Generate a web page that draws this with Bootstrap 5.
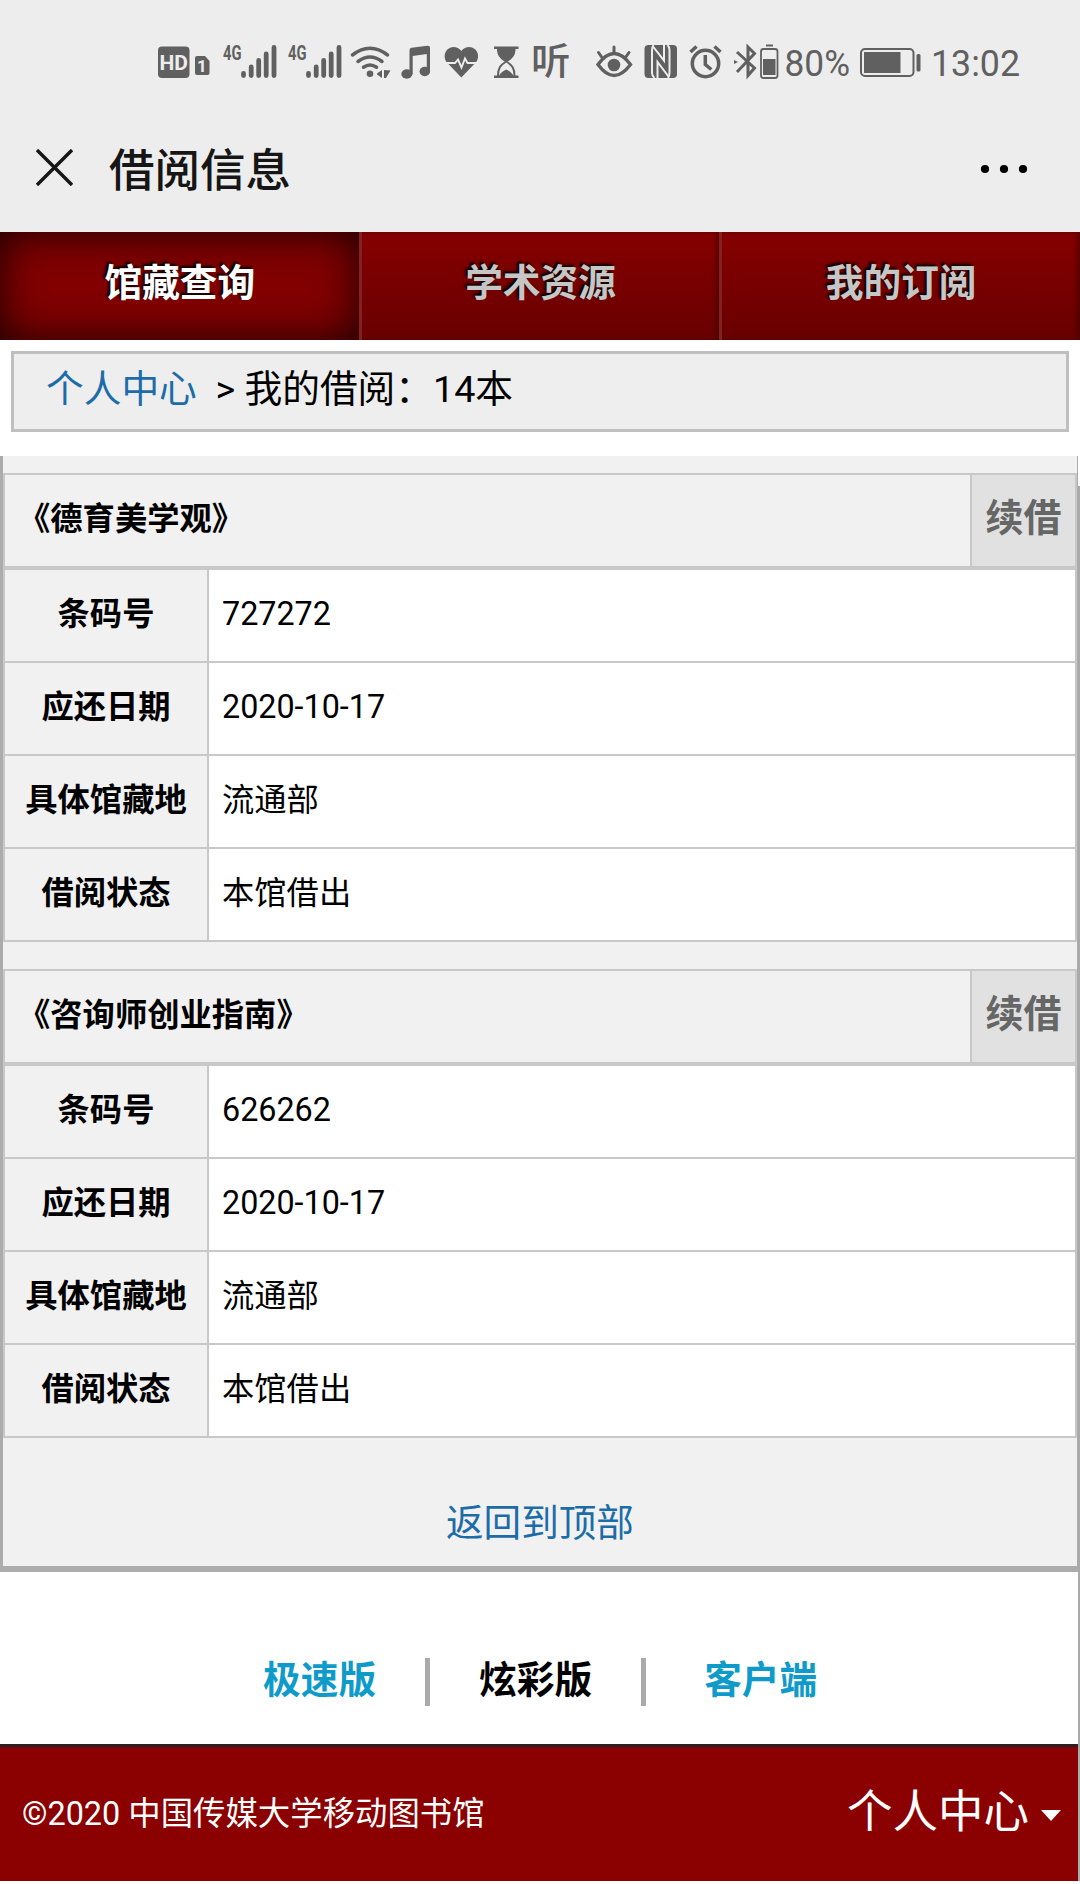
<!DOCTYPE html>
<html lang="zh-CN">
<head>
<meta charset="utf-8">
<meta name="viewport" content="width=device-width, initial-scale=1">
<title>借阅信息</title>
<link href="https://cdn.jsdelivr.net/npm/bootstrap@5.3.0/dist/css/bootstrap.min.css" rel="stylesheet">
<style>
body{font-family:Roboto,"Noto Sans CJK SC",sans-serif;color:#000;background:#fff;font-size:32.300px;line-height:1}
a{text-decoration:none}
.status-bar{height:104px;padding:40px 0 0 150px;background:#ededed;color:#606060}
.status-bar svg{flex:none;height:44px;overflow:visible;fill:#606060;font-family:Roboto,"Noto Sans CJK SC",sans-serif}
.status-bar .ln{fill:none;stroke:#606060}
.title-bar{height:128px;padding:0 50px 0 36px;background:#ededed;color:#161616}
.title-bar h1{font-size:45.500px;font-weight:500;line-height:64px;margin:36px 0 0 36px}
.close-x{margin-top:45px}
.more-dots{margin-top:59px}
.tabs-red{height:108px}
.tabs-red .nav-link{height:108px;padding:0;border-radius:0;font-size:37.700px;font-weight:700;line-height:103px;color:#c6c6c6;background:linear-gradient(#860000,#680000);border-left:3px solid #852020;text-shadow:-2px -2px 3px #000;box-shadow:inset -3px 0 4px rgba(40,0,0,.45)}
.tabs-red .nav-link.active{color:#fff;background:#820000;border-left:0;box-shadow:inset 0 0 40px 2px #200000;padding-left:1px}
.crumb-box{margin:11px 11px 24px;height:81px;border:3px solid #bfbfbf;background:#eee;padding-left:32px;font-size:37.700px;line-height:70px;white-space:pre}
.crumb-box a,.top-link{color:#1c6ca8}
.shell{position:relative}
.shell::after{content:"";position:absolute;right:0;top:30px;bottom:0;width:2px;background:#aaa}
.panel{margin-right:2px;border-left:3px solid #acacac;border-right:1px solid #acacac;border-bottom:6px solid #acacac;background:#f1f1f1;height:1116px;padding-top:17px}
.loan{border:2px solid #c8c8c8;border-bottom:0;margin-bottom:27px}
.loan-head{height:95px;border-bottom:4px solid #c8c8c8}
.loan-head h2{font-size:32.300px;font-weight:700;margin:0;padding-left:13px;line-height:88px}
.renew{width:105px;border-left:2px solid #c8c8c8;background:#e1e1e1;color:#666;font-size:38px;font-weight:700;line-height:86px;text-align:center}
.loan-row{height:93px;border-bottom:2px solid #c8c8c8;background:#fff;line-height:88px}
.loan-row dt{width:204px;background:#f1f1f1;border-right:2px solid #c8c8c8;text-align:center;font-weight:700}
.loan-row dd{margin:0;padding-left:13px}
.top-link{font-size:37.600px;line-height:62px;margin-top:54px}
.versions{height:172px;padding:86px 0 0 263px;font-size:37.700px;font-weight:700}
.versions .bar{width:5px;height:48px;background:#aaa;margin:0 49px 0 49px}
.versions .bar.wide{margin-right:58px}
.versions span,.versions a{line-height:44px}
.versions a{color:#0f9bca}
.foot{height:137px;margin-right:2px;border-top:3px solid #2b2023;background:#8b0000;color:#fff;padding:0 17px 0 22px;font-size:32.400px}
.foot .me{font-size:45.500px;color:#fff;line-height:60px;margin-top:-2px}
.foot .tri{border:10px solid transparent;border-top:11px solid #fff;border-bottom:0;margin:4px 0 0 12px}
</style>
</head>
<body>
<header>
  <div class="status-bar d-flex">
    <svg width="66" viewBox="150 40 66 44"><rect x="158" y="46.500" width="31.500" height="31.500" rx="4"/><text x="173.800" y="70" font-size="21" font-weight="700" text-anchor="middle" fill="#ededed">HD</text><path d="M197 56h8l4.500 5v12q0 2-2 2h-10.500q-2 0-2-2V58q0-2 2-2z"/><text x="202" y="72" font-size="17" font-weight="700" text-anchor="middle" fill="#ededed">1</text></svg>
    <svg width="65" viewBox="216 40 65 44"><text x="223" y="60" font-size="21" font-weight="700" textLength="18.500" lengthAdjust="spacingAndGlyphs">4G</text><path class="ln" stroke-width="4.800" stroke-linecap="round" d="M243.500 73.500v2M251.200 67v8.500M258.700 60.500v15M266.200 54v21.500M274 47.500v28"/></svg>
    <svg width="65" viewBox="216 40 65 44"><text x="223" y="60" font-size="21" font-weight="700" textLength="18.500" lengthAdjust="spacingAndGlyphs">4G</text><path class="ln" stroke-width="4.800" stroke-linecap="round" d="M243.500 73.500v2M251.200 67v8.500M258.700 60.500v15M266.200 54v21.500M274 47.500v28"/></svg>
    <svg width="50" viewBox="346 40 50 44"><path class="ln" stroke-width="3.500" stroke-linecap="round" d="M352.500 55q17.500-13.500 35 0M358 61.500q12-9 24 0M363.500 67.200q6.500-4.500 13 0"/><circle cx="370" cy="73.700" r="3.300"/><path d="M382 70v8l-5-3.500v-1zM384 70l6.500.5-4.500 7.500h-2z"/></svg>
    <svg width="44" viewBox="396 40 44 44"><path d="M409.500 50q0-2 2-2.300l16-2q2.500-.2 2.500 2V71h-3.200V54l-14.100 2v18.500h-3.200z"/><ellipse cx="406.800" cy="74" rx="5.500" ry="4.700"/><ellipse cx="424.800" cy="71.500" rx="5.300" ry="4.700"/></svg>
    <svg width="46" viewBox="440 40 46 44"><path d="M461.300 51C458 46.500 452 45.500 448 49c-4 3.400-4.300 9-1.500 13l14.800 15.500L476.200 62c2.900-4 2.600-9.600-1.500-13-4-3.500-10-2.500-13.400 2z"/><path fill="none" stroke="#ededed" stroke-width="1.900" d="M444 63h11l3-3.500 3.500 8 3.500-9 2.500 4.500h11"/></svg>
    <svg width="40" viewBox="486 40 40 44"><path d="M494 46.500h24.500v2.500H494zM494 75.500h24.500V78H494zM497 49h18.500c0 6-2.500 9-7.500 12.500h-3.500C499.500 58 497 55 497 49zM499 76c1-3 4-5 7.200-6.500 3.300 1.500 6.300 3.500 7.300 6.500z"/><path class="ln" stroke-width="2" d="M498 76c0-8 2.500-11 8.200-14.500 5.800 3.500 8.300 6.500 8.300 14.500"/></svg>
    <svg width="60" viewBox="526 40 60 44"><text x="531" y="75" font-size="37" font-weight="500" textLength="39.500" lengthAdjust="spacingAndGlyphs">听</text></svg>
    <svg width="52" viewBox="586 40 52 44"><path class="ln" stroke-width="3.400" d="M598 64.500q16-22 32.500 0-16.500 22-32.500 0z"/><circle cx="614" cy="65" r="6.300"/><path class="ln" stroke-width="3" stroke-linecap="round" d="M598.500 52.500l3.500 5M614 47v6M629 52.500l-3.500 5"/></svg>
    <svg width="46" viewBox="638 40 46 44"><rect x="644.500" y="45" width="32.500" height="33" rx="4"/><path fill="none" stroke="#ededed" stroke-width="2" d="M653.500 45q-1.500 2-1.500 5v23q0 3 2.500 5M667.500 45q2 2 2 5v23q0 3-1.500 5M657.500 78V62l11 14.500M664 45v15.500L653 46.500"/></svg>
    <svg width="44" viewBox="684 40 44 44"><circle class="ln" cx="705.500" cy="63.500" r="13.200" stroke-width="3.500"/><path class="ln" stroke-width="3.500" d="M690.500 52l6-5.500M720.500 52l-6-5.500M705.300 55v9.500l6 5"/></svg>
    <svg width="56" viewBox="728 40 56 44"><path class="ln" stroke-width="3" d="M737 52l17.500 16-6.500 7.500V47l6.500 6.500L737 72"/><path d="M734 60l4 2-4 2z"/><rect class="ln" x="761" y="49" width="16.500" height="29" rx="2.500" stroke-width="1.800"/><path d="M763 59h12.500v16H763zM766 44.500h7V46.500h-7z"/></svg>
    <svg width="142" viewBox="784 40 142 44"><text x="784.500" y="76" font-size="36" textLength="65.500" lengthAdjust="spacingAndGlyphs">80%</text><rect class="ln" x="861" y="49" width="52.500" height="27" rx="4" stroke-width="2"/><rect x="864" y="52" width="36.500" height="21"/><rect x="916.500" y="54" width="4" height="17.500" rx="1.500"/></svg>
    <svg width="100" viewBox="926 40 100 44"><text x="931" y="76" font-size="36" textLength="89" lengthAdjust="spacingAndGlyphs">13:02</text></svg>
  </div>
  <div class="title-bar d-flex">
    <svg class="close-x" width="37" height="37" viewBox="0 0 37 37"><path d="M1 1l35 35M36 1L1 36" stroke="#161616" stroke-width="3.400"/></svg>
    <h1 class="flex-grow-1">借阅信息</h1>
    <svg class="more-dots" width="50" height="12" viewBox="0 0 50 12"><circle cx="5" cy="6" r="4.100"/><circle cx="24" cy="6" r="4.100"/><circle cx="43" cy="6" r="4.100"/></svg>
  </div>
</header>
<nav class="tabs-red nav nav-justified flex-nowrap">
  <a class="nav-link active" href="#">馆藏查询</a>
  <a class="nav-link" href="#">学术资源</a>
  <a class="nav-link" href="#">我的订阅</a>
</nav>
<div class="crumb-box"><a href="#">个人中心</a>  &gt; 我的借阅：14本</div>
<div class="shell">
  <main class="panel">
    <section class="loan">
      <div class="loan-head d-flex"><h2 class="flex-grow-1">《德育美学观》</h2><div class="renew">续借</div></div>
      <dl class="m-0">
        <div class="loan-row d-flex"><dt>条码号</dt><dd>727272</dd></div>
        <div class="loan-row d-flex"><dt>应还日期</dt><dd>2020-10-17</dd></div>
        <div class="loan-row d-flex"><dt>具体馆藏地</dt><dd>流通部</dd></div>
        <div class="loan-row d-flex"><dt>借阅状态</dt><dd>本馆借出</dd></div>
      </dl>
    </section>
    <section class="loan mb-0">
      <div class="loan-head d-flex"><h2 class="flex-grow-1">《咨询师创业指南》</h2><div class="renew">续借</div></div>
      <dl class="m-0">
        <div class="loan-row d-flex"><dt>条码号</dt><dd>626262</dd></div>
        <div class="loan-row d-flex"><dt>应还日期</dt><dd>2020-10-17</dd></div>
        <div class="loan-row d-flex"><dt>具体馆藏地</dt><dd>流通部</dd></div>
        <div class="loan-row d-flex"><dt>借阅状态</dt><dd>本馆借出</dd></div>
      </dl>
    </section>
    <a class="top-link d-block text-center" href="#">返回到顶部</a>
  </main>
  <div class="versions d-flex">
    <a href="#">极速版</a><div class="bar"></div><span>炫彩版</span><div class="bar wide"></div><a href="#">客户端</a>
  </div>
  <footer class="foot d-flex align-items-center justify-content-between">
    <span>©2020 中国传媒大学移动图书馆</span>
    <a class="me d-flex align-items-center" href="#">个人中心<i class="tri"></i></a>
  </footer>
</div>
<script src="https://cdn.jsdelivr.net/npm/bootstrap@5.3.0/dist/js/bootstrap.bundle.min.js"></script>
</body>
</html>
